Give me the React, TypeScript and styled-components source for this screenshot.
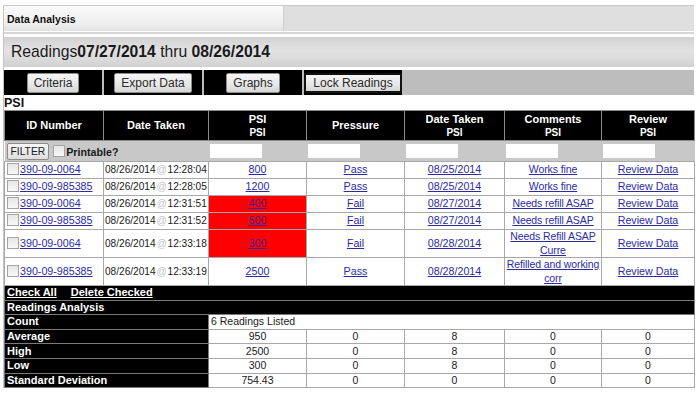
import React from 'react';
import styled, { createGlobalStyle } from 'styled-components';

const GlobalStyle = createGlobalStyle`
  html, body {
    margin: 0;
    padding: 0;
    background: #fff;
  }
  body {
    font-family: "Liberation Sans", Arial, sans-serif;
    color: #111;
  }
`;

interface Reading {
  id: string;
  date: string;
  time: string;
  psi: string;
  pressure: 'Pass' | 'Fail';
  taken: string;
  comment: string;
}

const readings: Reading[] = [
  { id: '390-09-0064', date: '08/26/2014', time: '12:28:04', psi: '800', pressure: 'Pass', taken: '08/25/2014', comment: 'Works fine' },
  { id: '390-09-985385', date: '08/26/2014', time: '12:28:05', psi: '1200', pressure: 'Pass', taken: '08/25/2014', comment: 'Works fine' },
  { id: '390-09-0064', date: '08/26/2014', time: '12:31:51', psi: '400', pressure: 'Fail', taken: '08/27/2014', comment: 'Needs refill ASAP' },
  { id: '390-09-985385', date: '08/26/2014', time: '12:31:52', psi: '500', pressure: 'Fail', taken: '08/27/2014', comment: 'Needs refill ASAP' },
  { id: '390-09-0064', date: '08/26/2014', time: '12:33:18', psi: '300', pressure: 'Fail', taken: '08/28/2014', comment: 'Needs Refill ASAP\nCurre' },
  { id: '390-09-985385', date: '08/26/2014', time: '12:33:19', psi: '2500', pressure: 'Pass', taken: '08/28/2014', comment: 'Refilled and working\ncorr' },
];

const stats = [
  { label: 'Average', values: ['950', '0', '8', '0', '0'] },
  { label: 'High', values: ['2500', '0', '8', '0', '0'] },
  { label: 'Low', values: ['300', '0', '8', '0', '0'] },
  { label: 'Standard Deviation', values: ['754.43', '0', '0', '0', '0'] },
];

const columnWidths = [99, 105, 98, 98, 100, 97, 93];

const Page = styled.div`
  width: 690px;
  margin: 5px 0 0 3px;
  border-left: 1px solid #c4c4c4;
`;

const TopBar = styled.div`
  display: flex;
  height: 25px;
  background: #dedede;
  border-top: 1px solid #c8c8c8;
  border-bottom: 1px solid #fff;
`;

const Tab = styled.div`
  width: 276px;
  display: flex;
  align-items: center;
  padding-left: 3px;
  background: linear-gradient(#fbfbfb, #eeeeee 70%, #e2e2e2);
  border-right: 1px solid #cfcfcf;
  font-size: 10.5px;
  font-weight: bold;
  color: #111;
`;

const Rule = styled.div`
  height: 2px;
  background: #d6d6d6;
  margin-bottom: 3px;
`;

const TitleBar = styled.div`
  height: 30px;
  display: flex;
  align-items: center;
  padding-left: 7px;
  background: linear-gradient(#d2d2d2, #e2e2e2 45%, #dcdcdc 70%, #d0d0d0);
  font-size: 15.7px;
  color: #1a1a1a;

  b {
    font-weight: bold;
  }
`;

const Toolbar = styled.div`
  display: flex;
  gap: 2px;
  height: 25px;
  margin-top: 3px;
  background: #bdbdbd;
`;

const ToolCell = styled.div`
  width: 98px;
  display: flex;
  align-items: center;
  justify-content: center;
  background: #000;
`;

const ToolButton = styled.button<{ $active?: boolean }>`
  height: 20px;
  padding: 0 6px;
  font-family: "Liberation Sans", Arial, sans-serif;
  font-size: 12px;
  color: #2a2a2a;
  background: linear-gradient(#f7f7f7, #e6e6e6 60%, #d6d6d6);
  border: ${({ $active }) => ($active ? '2px solid #111' : '1px solid #8c8c8c')};
  border-radius: 2px;
  ${({ $active }) => ($active ? 'width: 98px;' : '')}
`;

const SectionTitle = styled.div`
  font-size: 12.5px;
  font-weight: bold;
  height: 14px;
  line-height: 14px;
  margin-top: 1px;
`;

const Table = styled.table`
  width: 690px;
  border-collapse: collapse;
  table-layout: fixed;
  font-size: 10.7px;
`;

const HeadCell = styled.th`
  background: #000;
  color: #fff;
  font-size: 11px;
  font-weight: bold;
  line-height: 13px;
  height: 29px;
  padding: 0 2px;
  border: 1px solid #8a8a8a;
  text-align: center;
  vertical-align: middle;
`;

const SubHead = styled.span`
  display: block;
  font-size: 10px;
`;

const FilterCell = styled.td`
  background: #c8c8c8;
  height: 20px;
  padding: 0 1px;
  border-top: 1px solid #a8a8a8;
  border-bottom: 1px solid #a8a8a8;
  white-space: nowrap;
  vertical-align: middle;
`;

const FilterButton = styled.button`
  height: 17px;
  padding: 0 3px;
  margin-left: 1px;
  font-family: "Liberation Sans", Arial, sans-serif;
  font-size: 10.3px;
  color: #222;
  background: linear-gradient(#f7f7f7, #dedede);
  border: 1px solid #8c8c8c;
  border-radius: 2px;
  vertical-align: middle;
`;

const FilterLabel = styled.span`
  font-size: 10.7px;
  font-weight: bold;
  color: #1a1a1a;
  vertical-align: middle;
`;

const FilterInput = styled.input`
  width: 52px;
  height: 14px;
  padding: 0;
  border: none;
  background: #fff;
  display: block;
`;

const Check = styled.span<{ $inline?: boolean }>`
  display: inline-block;
  width: 10px;
  height: 10px;
  margin: 0 1px 0 ${({ $inline }) => ($inline ? '4px' : '1px')};
  border: 1px solid #a4a4a4;
  background: linear-gradient(#e6e6e6, #f8f8f8);
  vertical-align: ${({ $inline }) => ($inline ? 'middle' : 'text-top')};
`;

const Cell = styled.td<{ $align?: 'left' | 'center'; $alarm?: boolean }>`
  height: 16px;
  padding: 0 1px;
  line-height: 13.5px;
  text-align: ${({ $align }) => $align ?? 'center'};
  background: ${({ $alarm }) => ($alarm ? '#ff0000' : '#fff')};
  border: 1px solid #a8a8a8;
  white-space: pre;
  overflow: hidden;
  vertical-align: middle;
`;

const DataLink = styled.a<{ $alarm?: boolean }>`
  color: ${({ $alarm }) => ($alarm ? '#3b2696' : '#2b2ba8')};
  text-decoration: underline;
`;

const CommentLink = styled(DataLink)`
  font-size: 10.5px;
  letter-spacing: -0.1px;
`;

const DateText = styled.span`
  font-size: 10.1px;
  color: #1a1a1a;
  white-space: nowrap;
`;

const At = styled.span`
  display: inline-block;
  width: 12px;
  text-align: center;
  color: #c4c4c4;
`;

const BarCell = styled.td`
  background: #000;
  color: #fff;
  font-size: 11px;
  font-weight: bold;
  height: 13.6px;
  line-height: 13px;
  padding: 0 2px;
  border: 1px solid #7a7a7a;
`;

const BarLink = styled.a`
  color: #fff;
  text-decoration: underline;
  margin-right: 14px;
`;

const StatCell = styled.td<{ $align?: 'left' | 'center' }>`
  height: 13.6px;
  line-height: 13px;
  padding: 0 2px;
  font-size: 10.5px;
  color: #1a1a1a;
  text-align: ${({ $align }) => $align ?? 'center'};
  border: 1px solid #a8a8a8;
`;

const toolButtons = ['Criteria', 'Export Data', 'Graphs', 'Lock Readings'];

const App: React.FC = () => {
  const minPsi = 600;

  return (
    <>
      <GlobalStyle />
      <Page>
        <TopBar>
          <Tab>Data Analysis</Tab>
        </TopBar>
        <Rule />
        <TitleBar>
          Readings<b>07/27/2014</b>&nbsp;thru&nbsp;<b>08/26/2014</b>
        </TitleBar>
        <Toolbar>
          {toolButtons.map((label) => (
            <ToolCell key={label}>
              <ToolButton $active={label === 'Lock Readings'}>{label}</ToolButton>
            </ToolCell>
          ))}
        </Toolbar>
        <SectionTitle>PSI</SectionTitle>
        <Table>
          <colgroup>
            {columnWidths.map((w, i) => (
              <col key={i} style={{ width: w }} />
            ))}
          </colgroup>
          <thead>
            <tr>
              <HeadCell>ID Number</HeadCell>
              <HeadCell>Date Taken</HeadCell>
              <HeadCell>PSI<SubHead>PSI</SubHead></HeadCell>
              <HeadCell>Pressure</HeadCell>
              <HeadCell>Date Taken<SubHead>PSI</SubHead></HeadCell>
              <HeadCell>Comments<SubHead>PSI</SubHead></HeadCell>
              <HeadCell>Review<SubHead>PSI</SubHead></HeadCell>
            </tr>
            <tr>
              <FilterCell colSpan={2}>
                <FilterButton>FILTER</FilterButton>
                <Check $inline />
                <FilterLabel>Printable?</FilterLabel>
              </FilterCell>
              {[0, 1, 2, 3, 4].map((i) => (
                <FilterCell key={i}>
                  <FilterInput />
                </FilterCell>
              ))}
            </tr>
          </thead>
          <tbody>
            {readings.map((r, i) => {
              const alarm = Number(r.psi) < minPsi;
              return (
                <tr key={i}>
                  <Cell $align="left">
                    <Check />
                    <DataLink href="#">{r.id}</DataLink>
                  </Cell>
                  <Cell $align="left">
                    <DateText>
                      {r.date}
                      <At>@</At>
                      {r.time}
                    </DateText>
                  </Cell>
                  <Cell $alarm={alarm}>
                    <DataLink href="#" $alarm={alarm}>{r.psi}</DataLink>
                  </Cell>
                  <Cell>
                    <DataLink href="#">{r.pressure}</DataLink>
                  </Cell>
                  <Cell>
                    <DataLink href="#">{r.taken}</DataLink>
                  </Cell>
                  <Cell>
                    <CommentLink href="#">{r.comment}</CommentLink>
                  </Cell>
                  <Cell>
                    <DataLink href="#">Review Data</DataLink>
                  </Cell>
                </tr>
              );
            })}
          </tbody>
          <tbody>
            <tr>
              <BarCell colSpan={7}>
                <BarLink href="#">Check All</BarLink>
                <BarLink href="#">Delete Checked</BarLink>
              </BarCell>
            </tr>
            <tr>
              <BarCell colSpan={7}>Readings Analysis</BarCell>
            </tr>
            <tr>
              <BarCell colSpan={2}>Count</BarCell>
              <StatCell colSpan={5} $align="left">6 Readings Listed</StatCell>
            </tr>
            {stats.map((s) => (
              <tr key={s.label}>
                <BarCell colSpan={2}>{s.label}</BarCell>
                {s.values.map((v, i) => (
                  <StatCell key={i}>{v}</StatCell>
                ))}
              </tr>
            ))}
          </tbody>
        </Table>
      </Page>
    </>
  );
};

export default App;
